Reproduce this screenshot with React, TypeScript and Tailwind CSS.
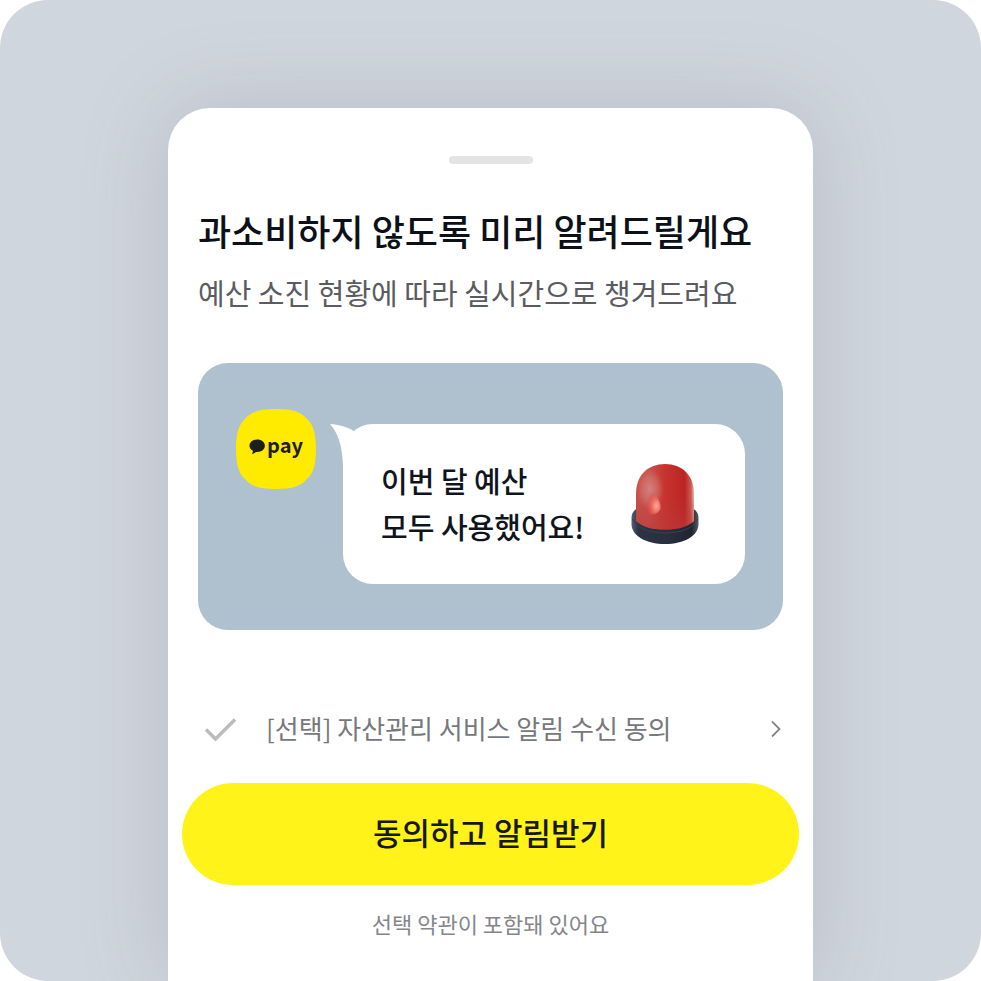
import React from 'react';

function PayLogo() {
  return (
    <div className="relative flex h-20 w-20 shrink-0 items-center justify-center">
      <svg viewBox="0 0 80 80" className="absolute inset-0 h-full w-full" aria-hidden="true">
        <path
          d="M40 0C57 0 65 3 70.500 9.500C77 15 80 24 80 40C80 56 77 65 70.500 70.500C65 77 57 80 40 80C23 80 15 77 9.500 70.500C3 65 0 56 0 40C0 24 3 15 9.500 9.500C15 3 23 0 40 0Z"
          fill="#ffeb00"
        />
      </svg>
      <div className="relative flex items-center pb-2">
        <svg width="17" height="16" viewBox="0 0 17 16" className="mt-1" aria-hidden="true">
          <path
            d="M8.200 .5C3.900 .5 .5 3.200.5 6.700C.5 8.900 1.900 10.800 4 11.800L3.300 14.800C3.200 15.100 3.500 15.300 3.800 15.100L7.200 12.900C7.500 12.900 7.900 12.900 8.200 12.900C12.500 12.900 15.900 10.200 15.900 6.700C15.900 3.200 12.500 .5 8.200 .5Z"
            fill="#1e1e1e"
          />
        </svg>
        <span className="ml-px font-['Noto_Sans_CJK_KR',sans-serif] text-xl leading-6 font-bold text-[#1e1e1e]">pay</span>
      </div>
    </div>
  );
}

function Siren() {
  return (
    <svg width="70" height="84" viewBox="0 0 70 84" className="shrink-0" aria-hidden="true">
      <defs>
        <linearGradient id="dome" x1="0" x2="1" y1="0" y2="0">
          <stop offset="0" stopColor="#c4504b" />
          <stop offset=".22" stopColor="#c8504b" />
          <stop offset=".5" stopColor="#c7332f" />
          <stop offset=".84" stopColor="#bb2522" />
          <stop offset=".95" stopColor="#cb5a56" />
          <stop offset="1" stopColor="#e8b8b2" />
        </linearGradient>
        <linearGradient id="base" x1="0" x2="1" y1="0" y2="0">
          <stop offset="0" stopColor="#566171" />
          <stop offset=".1" stopColor="#2c3443" />
          <stop offset=".55" stopColor="#282f3e" />
          <stop offset=".9" stopColor="#1f2430" />
          <stop offset="1" stopColor="#565c68" />
        </linearGradient>
        <radialGradient id="haze">
          <stop offset="0" stopColor="#d59a96" stopOpacity=".7" />
          <stop offset=".6" stopColor="#d4827d" stopOpacity=".45" />
          <stop offset="1" stopColor="#d56b65" stopOpacity="0" />
        </radialGradient>
        <radialGradient id="glow" cx=".7" cy=".6" r=".75">
          <stop offset="0" stopColor="#ffa99b" />
          <stop offset=".4" stopColor="#ee6f65" />
          <stop offset="1" stopColor="#d8443d" stopOpacity=".1" />
        </radialGradient>
        <linearGradient id="shade" x1="0" x2="0" y1="0" y2="1">
          <stop offset=".5" stopColor="#b83a3a" stopOpacity="0" />
          <stop offset="1" stopColor="#b83a3a" stopOpacity=".6" />
        </linearGradient>
        <filter id="soften" x="-20%" y="-20%" width="140%" height="140%">
          <feGaussianBlur stdDeviation=".7" />
        </filter>
      </defs>
      <path d="M1.500 56C1.500 51 4 48 8 46H62C66 48 68.500 51 68.500 56V62C68.500 74 54 82 35 82C16 82 1.500 74 1.500 62Z" fill="url(#base)" />
      <path d="M2.500 57C6 66 19 71 35 71C51 71 64 66 67.500 57" fill="none" stroke="#394150" strokeWidth="1" />
      <path d="M6 32C6 13 18 2 35 2C52 2 64 13 64 32V59C58 65 48 67.500 35 67.500C22 67.500 12 65 6 59Z" fill="url(#dome)" />
      <path d="M6 32C6 13 18 2 35 2C52 2 64 13 64 32V59C58 65 48 67.500 35 67.500C22 67.500 12 65 6 59Z" fill="url(#shade)" />
      <ellipse cx="20" cy="27" rx="14" ry="21" fill="url(#haze)" />
      <path d="M22 31C28 35 31 40 30.500 47C28 52 22 54 18 51C15 45 17 36 22 31Z" fill="url(#glow)" filter="url(#soften)" />
    </svg>
  );
}

function MessagePreview() {
  return (
    <section className="flex items-start rounded-[30px] bg-[#afc0cf] py-[46px] px-[38px]">
      <PayLogo />
      <div className="relative mt-[15px] ml-[27px] flex min-h-40 flex-1 items-center justify-between rounded-[30px] bg-white pr-[45px] pl-[38px]">
        <svg width="32" height="40" viewBox="0 0 32 40" className="absolute top-0 -left-[13px]" aria-hidden="true">
          <path d="M0 0C9 .5 18 3 23.500 7L32 24L13 40C12 21 8 9 0 0Z" fill="#fff" />
        </svg>
        <p className="pb-[2px] text-[29px] leading-[46px] font-medium text-[#10151d]">
          이번 달 예산
          <br />
          모두 사용했어요!
        </p>
        <Siren />
      </div>
    </section>
  );
}

function ConsentRow() {
  return (
    <div className="flex items-center pr-[2px] pl-[6px]">
      <span className="relative h-8 w-8 shrink-0">
        <input id="alarm-consent" type="checkbox" className="block h-8 w-8 cursor-pointer appearance-none" />
        <svg
          viewBox="0 0 32 32"
          fill="none"
          stroke="#bbbcbe"
          strokeWidth="3.500"
          className="pointer-events-none absolute inset-0"
          aria-hidden="true"
        >
          <path d="M2 16.500L11.500 26L31 6.500" />
        </svg>
      </span>
      <label htmlFor="alarm-consent" className="ml-[30px] flex-1 pb-[2px] text-[26px] leading-10 text-[#77787c]">
        [선택] 자산관리 서비스 알림 수신 동의
      </label>
      <a href="#terms" aria-label="약관 보기">
        <svg width="10" height="18" viewBox="0 0 10 18" fill="none" stroke="#85868a" strokeWidth="1.800" aria-hidden="true">
          <path d="M1 1.500L8.500 9L1 16.500" />
        </svg>
      </a>
    </div>
  );
}

export default function App() {
  return (
    <div className="bg-white font-['Noto_Sans_CJK_KR',sans-serif]">
      <div className="flex min-h-screen justify-center overflow-hidden rounded-[48px] bg-[#cfd6dd] pt-[108px]">
        <main className="flex w-full max-w-[645px] flex-col rounded-t-[42px] bg-white px-[14px] pb-8 shadow-[0_0_84px_rgba(120,115,135,0.25)]">
          <div className="mx-auto mt-12 h-2 w-[84px] rounded-full bg-[#e4e4e4]" />
          <div className="px-4">
            <h1 className="mt-10 text-4xl leading-[52px] font-medium text-[#0c1119]">
              과소비하지 않도록 미리 알려드릴게요
            </h1>
            <p className="mt-4 mb-[51px] text-[29px] leading-10 text-[#5b5c61]">
              예산 소진 현황에 따라 실시간으로 챙겨드려요
            </p>
            <MessagePreview />
            <div className="mt-[78px]">
              <ConsentRow />
            </div>
          </div>
          <button
            type="button"
            className="mt-[33px] h-[102px] w-full cursor-pointer rounded-full bg-[#fff31a] pb-1 text-[31px] font-medium text-[#16170f]"
          >
            동의하고 알림받기
          </button>
          <p className="mt-[22px] text-center text-[22px] leading-8 text-[#85868a]">선택 약관이 포함돼 있어요</p>
        </main>
      </div>
    </div>
  );
}
